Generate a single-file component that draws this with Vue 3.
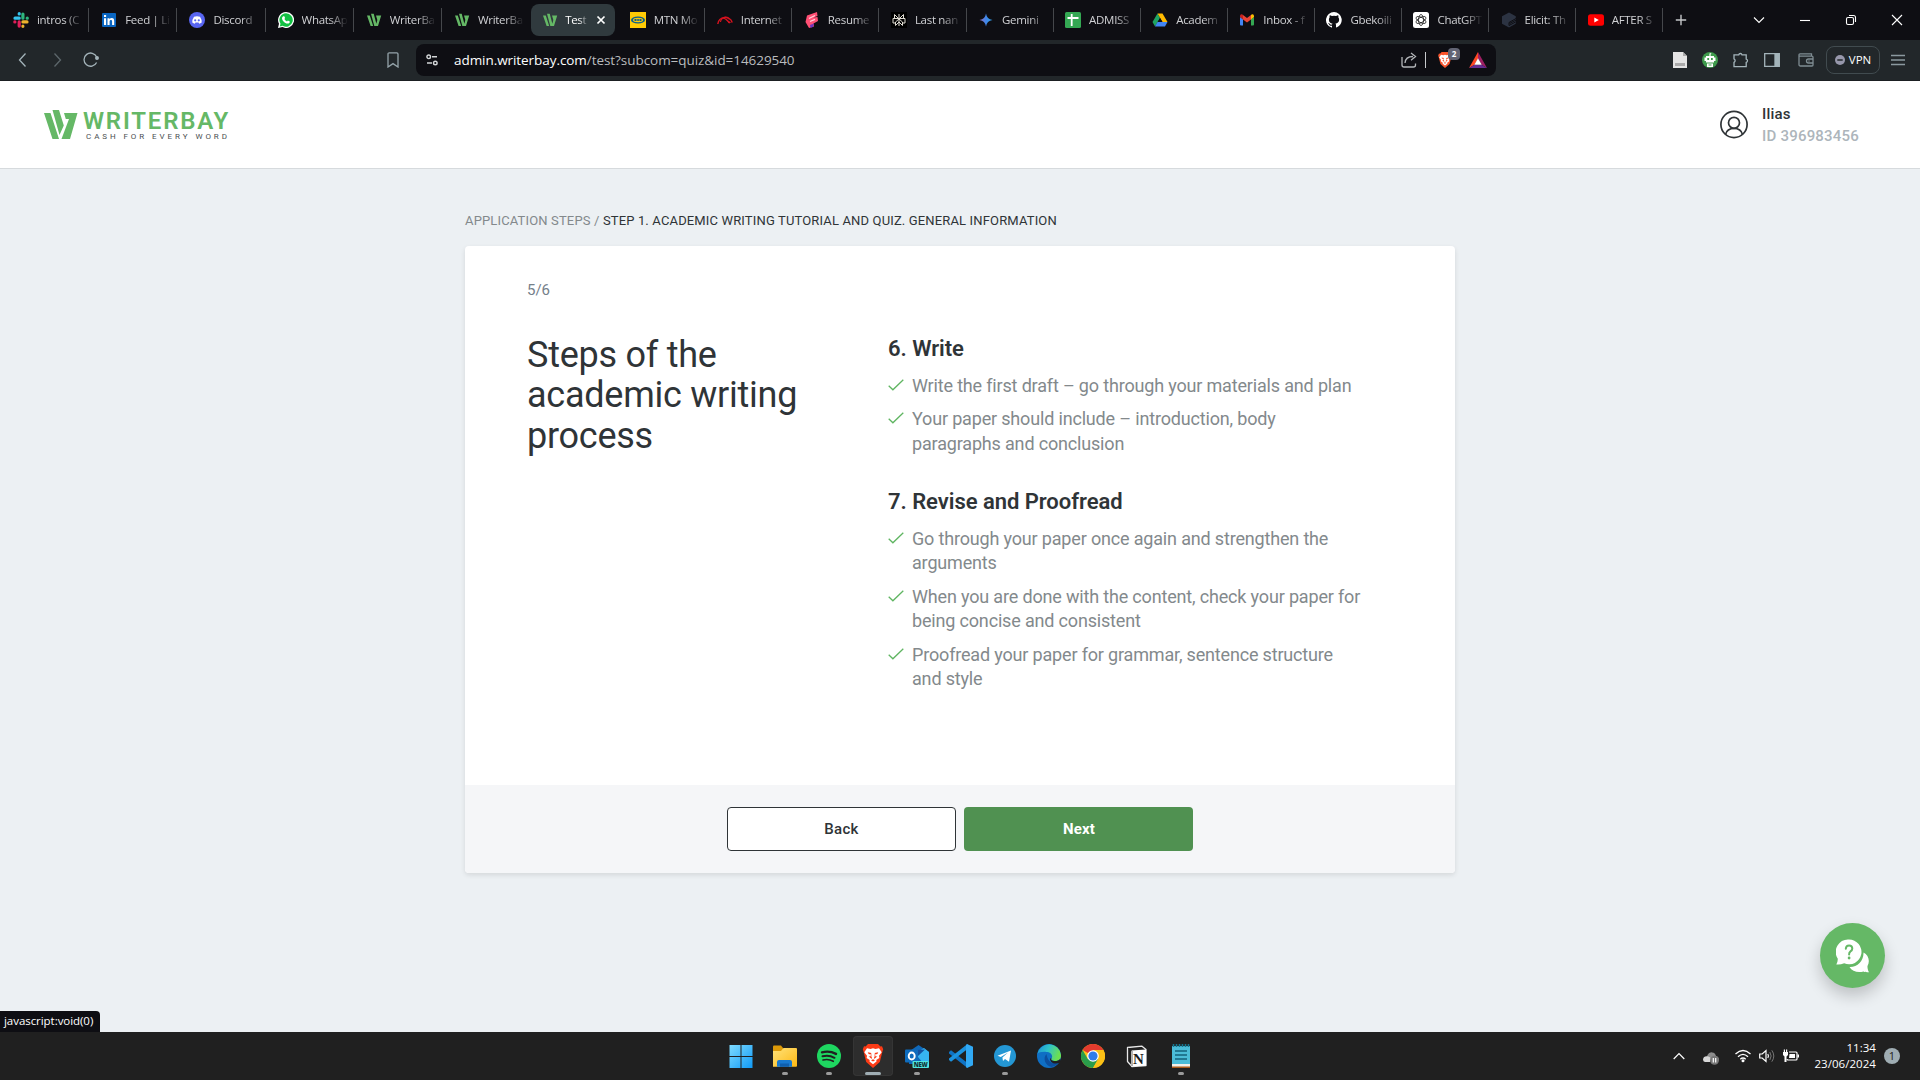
<script setup>
const wbMark = '<path fill="#65b866" d="M1 3.500h2.800L7.200 14H4.600zM5 1.800h2.700L11 14H8.300zM10 3.500h5.200L12 14H9.800L11.300 8z"/>'

const tabsBefore = [
  { title: 'intros (C', icon: '<g stroke-linecap="round" stroke-width="3.200" fill="none"><path stroke="#36c5f0" d="M2 6.200h4.200M6.200 1.700v.2"/><path stroke="#2eb67d" d="M9.900 2v4.200M14.200 6.200h.1"/><path stroke="#e01e5a" d="M6.200 9.900v4.200M1.800 9.900h.1"/><path stroke="#ecb22e" d="M9.900 9.900H14M9.900 14.200v.1"/></g>' },
  { title: 'Feed | Li', icon: '<rect x="1" y="1" width="14" height="14" rx="1" fill="#0a66c2"/><path fill="#fff" d="M3 6.200h2.100V13H3zM3 3h2.100v2H3zM6.500 6.200h2v1c.6-.8 1.300-1.200 2.300-1.200 1.800 0 2.400 1.200 2.400 3V13h-2.100V9.500c0-1-.3-1.600-1.100-1.600-.9 0-1.400.6-1.400 1.700V13H6.500z"/>' },
  { title: 'Discord', icon: '<circle cx="8" cy="8" r="8" fill="#5865f2"/><path fill="#fff" d="M5 4.700q3-1 6 0 1.900 2.800 1.700 5.700-1.200 1-2.500 1.300l-.7-1.100H6.500l-.7 1.100q-1.300-.3-2.500-1.300Q3.100 7.500 5 4.700z"/><circle cx="6.200" cy="8.300" r="1.100" fill="#5865f2"/><circle cx="9.800" cy="8.300" r="1.100" fill="#5865f2"/>' },
  { title: 'WhatsAp', icon: '<path fill="#fff" d="M8 0a8 8 0 1 1-3.600 15.100L0 16l1-4.200A8 8 0 0 1 8 0z"/><path fill="#12c143" d="M8 1.300a6.700 6.700 0 1 1-3.300 12.500l-2.900.7.700-2.800A6.700 6.700 0 0 1 8 1.300z"/><path fill="#fff" d="M5.200 4.200h1.100l.8 1.900-.7 1q.9 1.700 2.600 2.500l.9-1 1.900.9c.1 1.500-1 2.200-2.200 2.100C6.700 11.200 4.300 8.600 4 6.400c0-.9.500-1.800 1.200-2.200z"/>' },
  { title: 'WriterBa', icon: wbMark },
  { title: 'WriterBa', icon: wbMark },
]
const tabsAfter = [
  { title: 'MTN Mo', icon: '<path fill="#ffcb05" d="M0 0h16v16H0z"/><ellipse cx="8" cy="8" rx="7" ry="3.600" fill="#0b5f8c"/><ellipse cx="8" cy="8" rx="5" ry="2.200" fill="#ffcb05"/><path d="M4.500 8h2M7.300 8h1.500M9.500 8h2" stroke="#0b5f8c" stroke-width="1.800"/>' },
  { title: 'Internet', icon: '<g fill="none" stroke="#d5121e"><path stroke-width="1.500" d="M.8 12A7.400 7.400 0 0 1 15.200 10.500"/><path stroke-width="1.100" d="M3.500 10a5 5 0 0 1 9-2.500M6.500 6.500q3.500 0 5.500 4.500"/></g><path fill="#d5121e" d="M7 6.200l5.500 5.300 1.500-1.200z"/>' },
  { title: 'Resume', icon: '<path fill="#ff4f74" d="M3 3.500L13 0l.5 4-4 1.600 4-.6.5 4-4.500 2.500.5 3-5 1.500L1.500 10z"/><path stroke="#ffd3dc" stroke-width="1.300" d="M5 6.500l6-3M6 9.500l5-2.200"/><path fill="#6c35bf" d="M6 13l4-1.500-1 3.500-2.500.8z"/>' },
  { title: 'Last nan', icon: '<path fill="#000" d="M0 0h16v16H0z"/><path fill="none" stroke="#e0dcd3" d="M8 2v12M3.500 2.500L8 7l4.500-4.500v4H3.500zM4.500 13.500V10L8 7l3.500 3v3.500L8 10zM4 11H2V6.500h12V11h-2"/>' },
  { title: 'Gemini', icon: '<defs><linearGradient id="gm"><stop stop-color="#9a6ec0"/><stop offset=".5" stop-color="#3f86ea"/><stop offset="1" stop-color="#2fa4e8"/></linearGradient></defs><path fill="url(#gm)" d="M8 1.500q.8 5.700 6.500 6.500Q8.800 8.800 8 14.500 7.200 8.800 1.500 8 7.200 7.200 8 1.500z"/>' },
  { title: 'ADMISS', icon: '<rect width="16" height="16" rx="1.500" fill="#34a853"/><path d="M2.500 6h11M6.700 2v12" stroke="#fff" stroke-width="1.800"/>' },
  { title: 'Academ', icon: '<path fill="#1fa463" d="M5.500 1.500L8 6 3 14.500.5 10z"/><path fill="#ffba00" d="M5.500 1.500h5L15.500 10h-5z"/><path fill="#4285f4" d="M5.500 10h10L13 14.500H3z"/><path fill="#0e0e13" d="M8 6l2.400 4H5.700z"/>' },
  { title: 'Inbox - f', icon: '<path fill="#4285f4" d="M1 5l3 2.200V13.500H2q-1 0-1-1z"/><path fill="#34a853" d="M15 5l-3 2.200v6.300h2q1 0 1-1z"/><path fill="#ea4335" d="M4 3l4 3.100L12 3v4.400l-4 3.100-4-3.100z"/><path fill="#c5221f" d="M1 4q0-2 2-1.700L4 3v4.400L1 5z"/><path fill="#fbbc04" d="M15 4q0-2-2-1.700L12 3v4.400L15 5z"/>' },
  { title: 'Gbekoili', icon: '<path fill="#fff" d="M8 0a8 8 0 0 0-2.500 15.600c.4.100.5-.2.500-.4v-1.500c-2.200.5-2.700-1-2.700-1-.4-.9-.9-1.200-.9-1.200-.7-.5.100-.5.100-.5.800.1 1.200.8 1.200.8.700 1.200 1.900.9 2.300.7.100-.5.300-.9.500-1.100-1.800-.2-3.600-.9-3.600-4 0-.9.300-1.600.8-2.100-.1-.2-.4-1 .1-2.100 0 0 .7-.2 2.200.8a7.500 7.500 0 0 1 4 0c1.500-1 2.200-.8 2.200-.8.400 1.100.2 1.900.1 2.100.5.500.8 1.200.8 2.100 0 3.100-1.900 3.800-3.700 4 .3.300.6.700.6 1.500v2.200c0 .2.100.5.500.4A8 8 0 0 0 8 0z"/>' },
  { title: 'ChatGPT', icon: '<rect width="16" height="16" rx="2.500" fill="#fff"/><g fill="none" stroke="#222" stroke-width=".8"><ellipse cx="8" cy="8" rx="2.500" ry="5.500"/><ellipse cx="8" cy="8" rx="2.500" ry="5.500" transform="rotate(60 8 8)"/><ellipse cx="8" cy="8" rx="2.500" ry="5.500" transform="rotate(120 8 8)"/></g>' },
  { title: 'Elicit: Th', icon: '<path fill="#2c3342" d="M8 .500l6.800 3.700v3.500L8.500 11l.2 1 6-3.200v3L8 15.500 1 11.800V4.200z"/><path stroke="#0e0e13" fill="none" d="M15 6.500l-7 4v3l6.500-3.500"/>' },
  { title: 'AFTER S', icon: '<rect y="2.300" width="16" height="11.400" rx="2.500" fill="#f00"/><path fill="#fff" d="M6.300 5.500v5L10.800 8z"/>' },
]

const lion = '<path fill="#fb542b" d="M7 0h10l2.500 2.500 1.500-.2 1.200 3-.8 2.500-2.600 10.200L12 24l-6.800-6-2.600-10.200-.8-2.500 1.200-3 1.500.2z"/><path fill="#fff" d="M6 4.300l3.500.7L12 4.300l2.500.7L18 4.300l2.700 4-2.700 3.500.4 2.200-3.100 2 .2 1.600L12 20.300l-3.500-2.700.2-1.600-3.100-2 .4-2.200-2.700-3.500z"/><path fill="#fb542b" d="M6.800 8.300l3.600.7-.6 1.500-2.200-.4zM17.200 8.300l-3.600.7.6 1.500 2.200-.4zM10.600 9.500l-.3 2.700.8 2-.7.600-2.800-2.500 1.700.2zM13.400 9.500l.3 2.700-.8 2 .7.600 2.800-2.500-1.700.2zM12 15.300l2 1-2 1.300-2-1.300z"/>'

const apps = [
  { name: 'Start', icon: '<defs><linearGradient id="wn" x2="1" y2="1"><stop stop-color="#7fdcff"/><stop offset="1" stop-color="#1099f5"/></linearGradient></defs><path fill="url(#wn)" d="M.5 1h11v11H.5zM12.500 1h11v11h-11zM.5 13h11v11H.5zM12.500 13h11v11h-11z"/>' },
  { name: 'Files', run: 1, icon: '<defs><linearGradient id="fd" x2="1" y2="1"><stop stop-color="#ffe27a"/><stop offset="1" stop-color="#fdb813"/></linearGradient></defs><path fill="#dd9a08" d="M0 2.500q0-1 1-1h7l2 2.500v4H0z"/><path fill="url(#fd)" d="M0 7h8l2.500-3H23q1 0 1 1v17q0 .8-1 .8H0z"/><path fill="#1879cf" d="M4 22.800V18q0-2 2-2h11q2 0 2 2v4.800z"/><path fill="#0f5fae" d="M7 19.500h9v3.300H7z"/>' },
  { name: 'Spotify', run: 1, icon: '<circle cx="12" cy="12" r="12" fill="#1ed760"/><g fill="none" stroke="#202020" stroke-linecap="round"><path stroke-width="2.400" d="M5 8.300q7.500-2 14 1.600"/><path stroke-width="2" d="M5.500 12.300q6.500-1.700 12 1.500"/><path stroke-width="1.600" d="M6 16q5.500-1.400 10.300 1.300"/></g>' },
  { name: 'Brave', run: 1, on: 1, icon: lion.replaceAll('#fb542b', '#fb3b16') },
  { name: 'Outlook', run: 1, icon: '<path fill="#1068b8" d="M4 7.500L13.500 1 24 8v12H4z"/><path fill="#36b4f2" d="M10 9.500l9-5.500 5 4v9l-6 2z"/><path fill="#1352a0" d="M10 6l10-.5L13 12z"/><rect y="5.500" width="13" height="13" rx="1" fill="#0f6cbd"/><ellipse cx="6.700" cy="12" rx="3" ry="3.500" fill="none" stroke="#fff" stroke-width="1.900"/><rect x="7.500" y="17" width="16.500" height="7" rx="1" fill="#50e6e0"/><text x="8.800" y="22.700" font-family="Open Sans, sans-serif" font-size="6" font-weight="800" fill="#10343a" textLength="14">NEW</text>' },
  { name: 'Code', icon: '<path fill="#0f73c4" d="M0 8l2-1.700L18.500 19v5L0 9.500z"/><path fill="#1c93df" d="M0 16l2 1.700L18.500 5V0L0 14.500z"/><path fill="#31a9f4" d="M18 0l6 2.700v18.600L18 24l-1-1V1z"/>' },
  { name: 'Telegram', run: 1, icon: '<circle cx="12" cy="12" r="11" fill="#2497d4"/><path fill="#fff" d="M4.500 11.800L18 6.500l-2 11.200-4-2.800-2 2-.6-3.300 5.600-5-7.200 4.500z"/>' },
  { name: 'Edge', icon: '<defs><linearGradient id="eg" x2="1" y2=".3"><stop stop-color="#1b8fd8"/><stop offset=".5" stop-color="#2fc3c8"/><stop offset="1" stop-color="#6be052"/></linearGradient></defs><circle cx="12" cy="12" r="12" fill="#0f6fc4"/><path fill="url(#eg)" d="M.3 10A12 12 0 0 1 24 11c.4 4-2.500 6-6 6-3 0-4.500-1.200-3.500-2.500 2-3-1-6.500-5-6.500C5 7.500 1.500 8.500.3 10z"/><path fill="#0c4f9e" d="M9.500 10c-4 4-1.500 11.500 5 13q5-1 7.700-5c-5.700 3-11.500.5-12.700-8z"/><path fill="#202020" d="M14.500 14.500c-1 1.300.5 2.500 3.500 2.500 2 0 4-.5 5-2l1 3-2 1c-5 1.500-9-.5-9-4.500z"/>' },
  { name: 'Chrome', icon: '<circle cx="12" cy="12" r="12" fill="#fbc116"/><path fill="#e33b2e" d="M12 12L1.600 6A12 12 0 0 1 22.400 6H12z"/><path fill="#2a9d4b" d="M1.600 6A12 12 0 0 0 12 24l5.200-9L12 12 6.800 15z"/><path fill="#fbc116" d="M22.400 6H12l5.200 9L12 24A12 12 0 0 0 22.400 6z"/><circle cx="12" cy="12" r="5.800" fill="#fff"/><circle cx="12" cy="12" r="4.600" fill="#2f7de9"/>' },
  { name: 'Notion', icon: '<path fill="#202020" stroke="#e8e8e8" stroke-width="1.300" stroke-linejoin="round" d="M2.500 3.500L17 2.200l4 3.300v16L7 22.500l-4.500-5z"/><path fill="#fff" d="M6 6.500l15-1v16l-15 1z"/><path fill="none" stroke="#222" stroke-width=".7" d="M3 4l4 3v15"/><text x="8" y="19.600" font-family="Liberation Serif, serif" font-weight="700" font-size="15" fill="#1b1b1b">N</text>' },
  { name: 'Notepad', run: 1, icon: '<path fill="#a95a1a" d="M3 21h18v3H3z"/><path fill="#f3efe8" d="M3 19h18v3.500H3z"/><path fill="#4bbcd8" d="M3 2h18v18H3z"/><path d="M4.500 0v3M7.500 0v3M10.500 0v3M13.500 0v3M16.500 0v3M19.500 0v3" stroke="#15758f" stroke-width="1.600"/><path d="M6 7h12M6 11h12M6 15h12" stroke="#14617c" stroke-width="1.700"/>' },
]

const sections = [
  { title: '6. Write', items: [['Write the first draft – go through your materials and plan'], ['Your paper should include – introduction, body', 'paragraphs and conclusion']] },
  { title: '7. Revise and Proofread', items: [['Go through your paper once again and strengthen the', 'arguments'], ['When you are done with the content, check your paper for', 'being concise and consistent'], ['Proofread your paper for grammar, sentence structure', 'and style']] },
]
</script>

<template>
  <div class="screen">
    <div class="tabstrip">
      <div v-for="(t, i) in tabsBefore" :key="'b' + i" class="tab" :class="{ bare: i === 5 }">
        <svg class="fav" viewBox="0 0 16 16" v-html="t.icon" /><span class="tab-title">{{ t.title }}</span>
      </div>
      <div class="tab active">
        <svg class="fav" viewBox="0 0 16 16" v-html="wbMark" /><span class="tab-title">Test</span>
        <svg class="close" viewBox="0 0 10 10"><path d="M1.500 1.500l7 7M8.500 1.500l-7 7" stroke="#fff" stroke-width="1.700" /></svg>
      </div>
      <div v-for="(t, i) in tabsAfter" :key="'a' + i" class="tab slim">
        <svg class="fav" viewBox="0 0 16 16" v-html="t.icon" /><span class="tab-title">{{ t.title }}</span>
      </div>
      <svg class="plus" viewBox="0 0 12 12"><path d="M6 .8v10.400M.8 6h10.400" stroke="#c4c6c9" stroke-width="1.400" /></svg>
      <div class="window-ctl">
        <svg viewBox="0 0 12 12"><path d="M1 3.500l5 5 5-5" /></svg>
        <svg viewBox="0 0 12 12"><path d="M1 6.500h10" /></svg>
        <svg viewBox="0 0 12 12"><rect x="1.500" y="3.500" width="7" height="7" rx="1.500" /><path d="M4 1.500h4.500q2 0 2 2V8" /></svg>
        <svg viewBox="0 0 12 12"><path d="M1 1l10 10M11 1L1 11" /></svg>
      </div>
    </div>

    <div class="toolbar">
      <div class="nav">
        <svg viewBox="0 0 16 16"><path d="M10.500 1.500L4.500 8l6 6.500" /></svg>
        <svg class="dim" viewBox="0 0 16 16"><path d="M5.500 1.500l6 6.500-6 6.500" /></svg>
        <svg viewBox="0 0 16 16"><path d="M13.600 10.500A6.600 6.600 0 1 1 13.700 5" /><circle cx="14" cy="6" r="1.300" fill="#a4b4ba" /></svg>
      </div>
      <svg class="bookmark" viewBox="0 0 12 16"><path d="M1 2q0-1.200 1.200-1.200h7.600Q11 .8 11 2v13l-5-3.400L1 15z" /></svg>
      <div class="address">
        <svg class="tune" viewBox="0 0 12 12"><g fill="none" stroke="#d3d6d8" stroke-width="1.400"><circle cx="2.700" cy="2.800" r="1.800" /><circle cx="9.300" cy="9" r="1.800" /><path d="M6 2.800h5M1 9h5" /></g></svg>
        <span class="url"><b>admin.writerbay.com</b>/test?subcom=quiz&amp;id=14629540</span>
        <svg class="share" viewBox="0 0 16 16"><path d="M1 5v8q0 2 2 2h9.500q2 0 2-2v-1.500M4 11q.5-6.500 8-6.500M10 1l4.500 3.500L10 8.300" /></svg>
        <i class="rule"></i>
        <div class="shield">
          <svg viewBox="0 0 24 24" v-html="lion" /><span>2</span>
        </div>
        <svg class="bat" viewBox="0 0 18 16"><path fill="#ff4724" d="M9 0L0 16l5.500-3.300L9 6.500z" /><path fill="#9e1f63" d="M9 0l9 16-5.500-3.300L9 6.500z" /><path fill="#662d91" d="M0 16h18l-5.500-3.300h-7z" /><path fill="#fff" d="M9 6.300l3.700 6.500H5.300z" /></svg>
      </div>
      <div class="ext">
        <svg viewBox="0 0 16 16"><path fill="#e4e4e4" d="M1 0h10l4 4v12H1z" /><path fill="#aaa" d="M11 0l4 4h-4zM3 11h10v3H3z" /></svg>
        <svg class="robot" viewBox="0 0 16 16"><circle cx="8" cy="8" r="8" fill="#3f9a4c" /><path fill="#fff" d="M7.400 1.500L9.500 1 8.600 2.500V4H12v1.500h1.500V9H12v1.500H4V9H2.500V5.500H4V4h3.400zM5 11.500h6V15H5z" /><path fill="#3f9a4c" d="M5.300 6h1.800v2H5.300zM9 6h1.800v2H9zM6.500 12.500h3v1h-3z" /></svg>
        <svg viewBox="0 0 16 16" class="line"><path d="M1 2.800h4.700a1.700 1.700 0 0 1 3.300 0h4.200v4.300a1.700 1.700 0 0 1 0 3.300v4.300H1v-4.300a2 2 0 0 0 0-3.600z" /></svg>
        <svg viewBox="0 0 16 16" class="line"><path d="M.7 1.700h14.600v12.600H.7z" /><path fill="#a4b4ba" d="M11 2h4v12h-4z" /></svg>
        <svg viewBox="0 0 16 16" class="line muted"><path d="M1 4.200V2.800q0-1 1-1h11.500v2.400M1 4.200h13q1 0 1 1V13q0 1-1 1H2.500Q1 14 1 12.500zM15 7h-4.500a2 2 0 0 0 0 4H15M10.500 9h1" /></svg>
      </div>
      <div class="vpn"><svg viewBox="0 0 10 10"><circle cx="5" cy="5" r="5" fill="#9797ab" /><path d="M2.300 5h5.400" stroke="#22272a" stroke-width="1.500" /></svg><span>VPN</span></div>
      <svg class="menu" viewBox="0 0 14 12"><path d="M0 1.500h14M0 6h14M0 10.500h14" stroke="#8b999f" stroke-width="1.300" /></svg>
    </div>

    <main class="page">
      <header class="site-header">
        <div class="logo">
          <svg class="mark" viewBox="0 0 34 29"><path fill="#65b866" d="M0 3h6.500L15 29H8.500zM8.500 0H15l4.800 15.500L15.500 25zM20 3h13.500L26 29h-8.500L25 9h-3.200z" /></svg>
          <div class="logo-text">
            <span class="brand">WRITERBAY</span>
            <span class="tagline">CASH FOR EVERY WORD</span>
          </div>
        </div>
        <div class="user">
          <svg viewBox="0 0 28 28"><g fill="none" stroke="#2f3437" stroke-width="1.700"><circle cx="14" cy="14" r="13.100" /><circle cx="14" cy="12.300" r="5.500" /><path d="M5.500 24q1.500-6.200 8.500-6.200t8.500 6.200" /></g></svg>
          <div><div class="name">Ilias</div><div class="uid">ID 396983456</div></div>
        </div>
      </header>

      <div class="content">
        <div class="crumbs"><span>APPLICATION STEPS / </span>STEP 1. ACADEMIC WRITING TUTORIAL AND QUIZ. GENERAL INFORMATION</div>
        <section class="card">
          <div class="card-body">
            <div class="left">
              <div class="count">5/6</div>
              <h1>Steps of the<br>academic writing<br>process</h1>
            </div>
            <div class="right">
              <div v-for="s in sections" :key="s.title" class="section">
                <h2>{{ s.title }}</h2>
                <ul>
                  <li v-for="it in s.items" :key="it[0]">
                    <svg viewBox="0 0 16 12"><path d="M.7 6.800l4.200 4L15.300.7" fill="none" stroke="#5fb561" stroke-width="1.300" /></svg>
                    <div><div v-for="l in it" :key="l">{{ l }}</div></div>
                  </li>
                </ul>
              </div>
            </div>
          </div>
          <div class="card-foot">
            <button class="back">Back</button>
            <button class="next">Next</button>
          </div>
        </section>
      </div>

      <div class="status">javascript:void(0)</div>
      <div class="chat">
        <svg viewBox="0 0 34 34"><path fill="#fff" d="M27.500 13.500c5 2.500 6.800 8.500 4 13.500-.2 1.600.4 4 1.500 6.300-2 0-4.200-.2-5.500-.8-5.500 1.600-11.500 0-14-4.500 8 .3 14.300-6 14-14.500z" /><path fill="#fff" d="M13 .500a12.400 12.400 0 1 1-4.800 23.800Q4 26 .3 25.500 2 22.500 1.700 19.500A12.400 12.400 0 0 1 13 .5z" /><path d="M9.800 9.800q.2-3.300 3.300-3.300t3.200 3q0 1.700-1.800 2.800-1.500 1-1.400 3.200" fill="none" stroke="#65b866" stroke-width="2" stroke-linecap="round" /><circle cx="13.100" cy="19" r="1.400" fill="#65b866" /></svg>
      </div>
    </main>

    <footer class="taskbar">
      <div class="apps">
        <div v-for="a in apps" :key="a.name" class="app" :class="{ on: a.on, run: a.run }">
          <svg viewBox="0 0 24 24" v-html="a.icon" />
        </div>
      </div>
      <div class="tray">
        <svg class="up" viewBox="0 0 12 8"><path d="M.7 7L6 1.500 11.300 7" fill="none" stroke="#fff" stroke-width="1.200" /></svg>
        <svg class="cloud" viewBox="0 0 16 14"><path fill="#8d8d8d" d="M4.500 4a4.500 4.500 0 0 1 8.500 1q3 .5 3 4H3z" /><path fill="#d8d8d8" d="M0 8.500Q.5 5 4 5.200q3 0 4 2.800l-1 3H2Q0 10.500 0 8.500z" /><circle cx="11.500" cy="9.300" r="4.500" fill="#777" /><path d="M10.300 7v4.600M12.700 7v4.600" stroke="#fff" stroke-width="1.200" /></svg>
        <svg class="wifi" viewBox="0 0 16 14"><g fill="none" stroke="#fff" stroke-width="1.300"><path d="M.5 5q7.500-7 15 0M3 7.700q5-4.600 10 0M5.300 10.200q2.700-2.400 5.400 0" /></g><circle cx="8" cy="11.700" r="1.500" fill="#fff" /></svg>
        <svg class="vol" viewBox="0 0 16 14"><g fill="none" stroke="#fff" stroke-width="1.200"><path d="M.7 5h2.500L7 1.500v11L3.200 9H.7z" /><path d="M8.800 5q1.300 2 0 4" /></g><path fill="none" stroke="#777" d="M10.800 3q2.700 4 0 8M12.800 1.300q4 5.700 0 11.400" /></svg>
        <svg class="batt" viewBox="0 0 16 14"><path fill="none" stroke="#fff" stroke-width="1.200" d="M6 3h7q1 0 1 1v6q0 1-1 1H5q-1 0-1-1" /><path fill="#fff" d="M6.500 5H12v4H6zM14.500 5.500H16v3h-1.500zM0 3h5v3L3.500 7.500V13h-2V7.500L0 6zM.8.500H2V3H.8zM3 .5h1.200V3H3z" /></svg>
        <div class="clock"><span>11:34</span><span>23/06/2024</span></div>
        <div class="notif">1</div>
      </div>
    </footer>
  </div>
</template>

<style>
body { margin: 0; overflow: hidden; }
</style>

<style scoped>
* { box-sizing: border-box; }
svg { display: block; flex: none; }
.screen { width: 1920px; height: 1080px; display: flex; flex-direction: column; overflow: hidden; font-family: Roboto, sans-serif; }

.tabstrip { height: 40px; flex: none; background: #0e0e13; display: flex; align-items: center; padding-left: 1px; font-family: "Open Sans", sans-serif; }
.tab { width: 88.200px; height: 24px; flex: none; display: flex; align-items: center; padding: 0 4px 0 12px; border-right: 1px solid #45474b; }
.tab.bare { border-color: transparent; }
.tab.slim { width: 87.100px; padding-left: 11.500px; }
.fav { width: 16px; height: 16px; }
.tab-title { margin-left: 8px; flex: 1; white-space: nowrap; font-size: 11.500px; line-height: 20px; letter-spacing: -0.300px; color: #d0d1d4; -webkit-mask-image: linear-gradient(90deg, #000 58%, transparent 98%); mask-image: linear-gradient(90deg, #000 58%, transparent 98%); }
.tab.active { width: 84px; height: 32px; margin: 0 3px 0 1px; border: 0; border-radius: 8px; background: #303a3e; padding: 0 9px 0 11px; }
.active .tab-title { margin-left: 7px; color: #fff; flex: none; width: 24px; }
.close { width: 10px; height: 10px; margin-left: auto; }
.plus { width: 12px; height: 12px; margin-left: 12px; }
.window-ctl { margin-left: auto; padding-right: 17px; display: flex; gap: 34px; }
.window-ctl svg { width: 12px; height: 12px; fill: none; stroke: #fff; stroke-width: 1.1; }

.toolbar { height: 41px; flex: none; background: #22272a; display: flex; align-items: center; padding-bottom: 1px; border-bottom: 1px solid #1b1f22; }
.nav { display: flex; gap: 18px; padding-left: 15px; }
.nav svg { width: 16px; height: 16px; fill: none; stroke: #a4b4ba; stroke-width: 1.3; }
.nav .dim { opacity: .45; }
.bookmark { width: 12px; height: 16px; margin-left: 288px; fill: none; stroke: #95a4aa; stroke-width: 1.3; }
.address { width: 1080px; height: 32px; margin-left: 17px; border-radius: 8px; background: #0e0e13; display: flex; align-items: center; padding: 0 9px 0 10px; }
.tune { width: 12px; height: 12px; }
.url { margin-left: 16px; flex: 1; font: 13.500px/20px "Open Sans", sans-serif; letter-spacing: -0.060px; color: #b9bbbe; }
.url b { font-weight: 400; color: #fff; }
.share { width: 16px; height: 16px; fill: none; stroke: #b3b6b9; stroke-width: 1.3; }
.rule { width: 1px; height: 16px; background: #c7c9cc; margin: 0 12px 0 8px; }
.shield { position: relative; width: 16px; margin-right: 16px; margin-left: -1px; }
.shield svg { width: 16px; height: 18px; }
.shield span { position: absolute; left: 11px; top: -3px; width: 12px; height: 12px; border-radius: 4px; background: #626473; color: #fff; font: 700 8px/12px "Open Sans", sans-serif; text-align: center; }
.bat { width: 18px; height: 16px; }
.ext { display: flex; gap: 15px; margin-left: 176px; }
.ext svg { width: 16px; height: 16px; }
.ext .robot { margin: 0 0 0 -1px; }
.line { fill: none; stroke: #a4b4ba; stroke-width: 1.3; }
.muted { stroke: #7f8d93; margin-left: 3px; }
.vpn { width: 54px; height: 28px; margin-left: 12px; border: 1px solid #414b4f; border-radius: 8px; display: flex; align-items: center; justify-content: center; gap: 4px; color: #fff; font: 11.5px/16px "Open Sans", sans-serif; }
.vpn svg { width: 10px; height: 10px; }
.menu { width: 14px; height: 12px; margin-left: 11px; }

.page { flex: 1; position: relative; background: #ecf0f3; }
.site-header { height: 88px; background: #fff; border-bottom: 1px solid #d6dadd; display: flex; justify-content: space-between; padding: 0 61px 0 44px; }
.logo { display: flex; padding-top: 29px; }
.mark { width: 34px; height: 29px; }
.logo-text { display: flex; flex-direction: column; margin-left: 5px; white-space: nowrap; }
.brand { font-weight: 600; font-size: 24px; line-height: 22px; letter-spacing: 1.800px; color: #65b866; }
.tagline { margin: 0 0 0 3px; font-size: 8px; line-height: 9px; letter-spacing: 2.930px; color: #4b4f52; }
.user { display: flex; padding-top: 29px; }
.user svg { width: 28px; height: 29px; margin-right: 14px; }
.user div { font-weight: 500; font-size: 15px; line-height: 22px; letter-spacing: .2px; }
.user > div { margin-top: -7px; }
.name { color: #2f3437; }
.uid { color: #adb5bb; }

.content { width: 990px; margin: 0 auto; }
.crumbs { padding-top: 42px; height: 77px; font-weight: 450; font-size: 13px; line-height: 20px; letter-spacing: .150px; color: #2f3437; white-space: nowrap; }
.crumbs span { color: #83898c; }
.card { background: #fff; border-radius: 4px; box-shadow: 0 2px 5px rgba(0, 0, 0, .1); overflow: hidden; }
.card-body { height: 539px; display: flex; padding: 0 62px; }
.left { width: 361px; padding-top: 34px; }
.count { font-size: 15px; line-height: 20px; color: #74808a; }
h1 { margin: 34.500px 0 0; font-weight: 450; font-size: 36px; line-height: 40.500px; letter-spacing: -.250px; color: #2f3437; white-space: nowrap; }
.right { padding-top: 88px; }
h2 { margin: 0 0 10px; font-weight: 600; font-size: 22px; line-height: 30px; letter-spacing: -.040px; color: #2f3437; }
ul { margin: 0; padding: 0; list-style: none; }
li { display: flex; margin-bottom: 9.200px; font-size: 18px; line-height: 24.300px; letter-spacing: -.170px; color: #83898c; white-space: nowrap; }
li svg { width: 16px; height: 12px; margin: 5px 8px 0 0; }
.section { margin-bottom: 31px; }
.card-foot { height: 88px; background: #f5f6f8; display: flex; justify-content: center; align-items: center; gap: 8px; }
button { width: 229px; height: 44px; padding: 0; border-radius: 4px; font: 500 15px/20px Roboto, sans-serif; letter-spacing: .3px; }
.back { background: #fff; border: 1px solid #2f3437; color: #2f3437; }
.next { background: #509151; border: 0; color: #fff; font-weight: 700; padding-left: 1px; letter-spacing: .1px; }

.status { position: absolute; left: 0; bottom: 0; width: 100px; height: 21px; padding-left: 4px; border-radius: 0 4px 0 0; background: #0e0e13; color: #fff; font: 11.500px/20px "Open Sans", sans-serif; letter-spacing: -.050px; white-space: nowrap; }
.chat { position: absolute; right: 35px; bottom: 44px; width: 65px; height: 65px; border-radius: 50%; background: #65b866; box-shadow: 0 8px 16px rgba(0, 0, 0, .2); display: flex; align-items: center; justify-content: center; }
.chat svg { width: 34px; height: 34px; }

.taskbar { height: 48px; flex: none; background: #202020; display: flex; align-items: center; }
.apps { display: flex; gap: 4px; margin-left: 720.500px; }
.app { position: relative; width: 40px; height: 40px; border-radius: 4px; display: flex; align-items: center; justify-content: center; }
.app svg { width: 24px; height: 24px; }
.app.on { background: #2d2d2d; box-shadow: inset 0 0 0 1px #353535; }
.run::after { content: ""; position: absolute; bottom: 1px; left: 17px; width: 6px; height: 3px; border-radius: 2px; background: #9a9a9a; }
.on::after { left: 12px; width: 16px; background: #9fadb3; }
.tray { margin-left: auto; display: flex; align-items: center; padding-right: 20px; font-family: "Open Sans", sans-serif; }
.up { width: 12px; height: 8px; margin-right: 18px; }
.cloud { width: 16px; height: 14px; margin: 3px 16px 0 0; }
.wifi { width: 16px; height: 14px; margin-right: 8px; }
.vol { width: 16px; height: 14px; margin-right: 8px; }
.batt { width: 16px; height: 14px; margin-right: 15px; }
.clock { width: 62px; display: flex; flex-direction: column; align-items: flex-end; font-size: 11.500px; line-height: 16px; letter-spacing: .050px; color: #fff; white-space: nowrap; }
.notif { width: 16px; height: 16px; margin-left: 8px; border-radius: 50%; background: #9fadb3; color: #202020; font-size: 11px; line-height: 16px; text-align: center; }
</style>
